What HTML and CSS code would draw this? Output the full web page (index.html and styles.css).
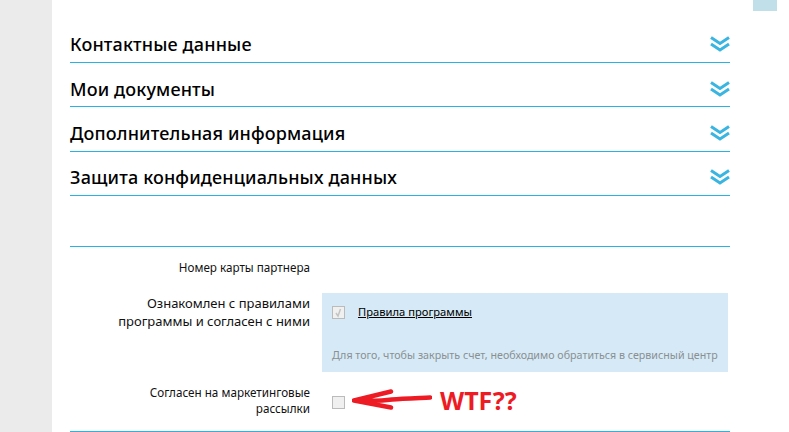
FILE: index.html
```html
<!DOCTYPE html>
<html lang="ru">
<head>
  <meta charset="UTF-8">
  <title>Личный кабинет</title>
  <link rel="stylesheet" href="styles.css">
</head>
<body>
  <div class="sidebar"></div>

  <div class="main">
    <!-- Секции профиля -->
    <div class="section">
      <h2>Контактные данные</h2>
      <svg class="chevrons" viewBox="0 0 20 16"><path d="M1 1.500l9 6 9-6M1 8l9 6 9-6"/></svg>
    </div>
    <div class="section">
      <h2>Мои документы</h2>
      <svg class="chevrons" viewBox="0 0 20 16"><path d="M1 1.500l9 6 9-6M1 8l9 6 9-6"/></svg>
    </div>
    <div class="section">
      <h2>Дополнительная информация</h2>
      <svg class="chevrons" viewBox="0 0 20 16"><path d="M1 1.500l9 6 9-6M1 8l9 6 9-6"/></svg>
    </div>
    <div class="section">
      <h2>Защита конфиденциальных данных</h2>
      <svg class="chevrons" viewBox="0 0 20 16"><path d="M1 1.500l9 6 9-6M1 8l9 6 9-6"/></svg>
    </div>

    <!-- Форма -->
    <div class="form">
      <div class="row row-card">
        <div class="label">Номер карты партнера</div>
      </div>
      <div class="row row-rules">
        <div class="label label-big">Ознакомлен с правилами<br>программы и согласен с ними</div>
        <div class="rules-box">
          <div class="rules-top">
            <span class="checkbox">
              <svg viewBox="0 0 11 11"><path d="M3 6l2 3 2.500-7"/></svg>
            </span>
            <a class="rules-link" href="#">Правила программы</a>
          </div>
          <div class="rules-note">Для того, чтобы закрыть счет, необходимо обратиться в сервисный центр</div>
        </div>
      </div>
      <div class="row row-marketing">
        <div class="label">Согласен на маркетинговые<br>рассылки</div>
        <div class="marketing-value">
          <span class="checkbox"></span>
          <svg class="arrow" viewBox="0 0 80 24"><path d="M2 12.500l37-9M2 12.500l37 7M2 12.500c12 .5 28 .5 38-1 10-1 28-1.500 38-2"/></svg>
          <span class="wtf">WTF??</span>
        </div>
      </div>
    </div>
  </div>

  <div class="aside">
    <div class="tab"></div>
  </div>
</body>
</html>
```

FILE: styles.css
```css
html, body {
  margin: 0;
  height: 432px;
  overflow: hidden;
}

body {
  display: flex;
  font-family: "Noto Sans", sans-serif;
  background-color: #fff;
  color: #000;
}

.sidebar {
  width: 52px;
  background-color: #ebebeb;
}

.main {
  width: 660px;
  margin-left: 18px;
  padding-top: 18.6px;
}

.aside {
  margin-left: 23px;
}

.tab {
  width: 24px;
  height: 11px;
  background-color: #c0dfe9;
}

.section {
  display: flex;
  justify-content: space-between;
  align-items: center;
  height: 43.4px;
  border-bottom: 1px solid #29b2e2;
}

.section h2 {
  margin: 8px 0 0;
  font-size: 18px;
  font-weight: 500;
  letter-spacing: 0.15px;
  line-height: 24px;
}

.chevrons {
  width: 20px;
  height: 16px;
  margin-top: 8px;
  fill: none;
  stroke: #3ab4e0;
  stroke-width: 3;
}

.form {
  margin-top: 50px;
  border-top: 1px solid #29b2e2;
  border-bottom: 1px solid #29b2e2;
}

.row {
  display: flex;
  gap: 12px;
}

.label {
  width: 240px;
  text-align: right;
  font-size: 11.7px;
  line-height: 16px;
  color: #111;
}

.label-big {
  font-size: 13px;
  line-height: 18px;
  padding-top: 1px;
}

.row-card {
  height: 46px;
  padding-top: 12px;
  box-sizing: border-box;
}

.row-marketing {
  height: 59px;
  padding-top: 12px;
  box-sizing: border-box;
}

.rules-box {
  width: 406px;
  height: 79px;
  box-sizing: border-box;
  padding: 13px 10px 0;
  background-color: #d5eaf6;
}

.rules-top {
  display: flex;
  align-items: flex-start;
  gap: 13px;
}

.checkbox {
  display: block;
  flex: none;
  width: 11px;
  height: 11px;
  border: 1px solid #bbb;
  background-color: #f0f0f0;
}

.checkbox svg {
  display: block;
  fill: none;
  stroke: #c4c4c4;
  stroke-width: 1.5;
}

.rules-link {
  margin-top: -1px;
  font-size: 11.2px;
  line-height: 13px;
  color: #000;
  text-decoration: underline;
}

.rules-note {
  margin-top: 28px;
  font-size: 10.7px;
  line-height: 16px;
  white-space: nowrap;
  color: #8b8f92;
}

.marketing-value {
  display: flex;
  align-items: flex-start;
  padding-left: 10px;
}

.marketing-value .checkbox {
  margin-top: 12px;
}

.arrow {
  width: 80px;
  height: 24px;
  margin-left: 7px;
  margin-top: 3.5px;
  fill: none;
  stroke: #ed1c24;
  stroke-width: 4.5;
  stroke-linecap: round;
}

.wtf {
  margin-left: 8px;
  margin-top: 4px;
  font-size: 25px;
  font-weight: 700;
  line-height: 24px;
  color: #ed1c24;
}
```
